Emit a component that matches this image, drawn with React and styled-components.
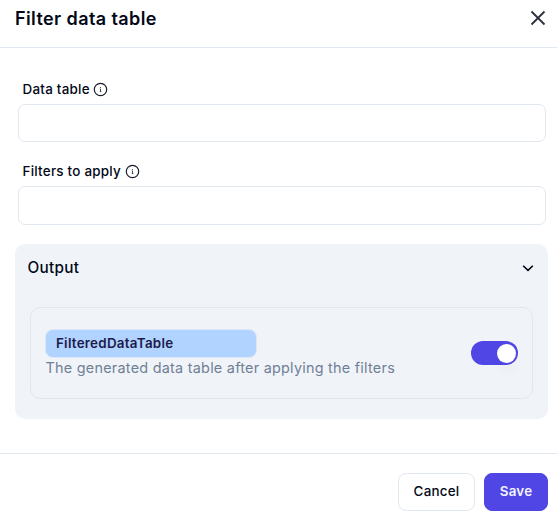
import React from "react";
import styled, { createGlobalStyle } from "styled-components";

const GlobalStyle = createGlobalStyle`
  * { box-sizing: border-box; }
  body { margin: 0; background: #fff; }
  button { font: inherit; cursor: pointer; }
`;

const Dialog = styled.div`
  width: 557px;
  height: 526px;
  display: flex;
  flex-direction: column;
  overflow: hidden;
  background: #fff;
  color: #020817;
  font-family: Inter, "Liberation Sans", sans-serif;
`;

const Header = styled.header`
  height: 48px;
  display: flex;
  justify-content: space-between;
  align-items: flex-start;
  padding: 5px 11px 0 15px;
  border-bottom: 1px solid #e2e8f0;
`;

const Title = styled.h2`
  margin: 0;
  font-size: 18px;
  line-height: 27px;
  font-weight: 600;
  letter-spacing: 0.4px;
`;

const CloseButton = styled.button`
  display: flex;
  margin-top: 5px;
  padding: 0;
  border: 0;
  background: none;
  color: #2b303e;
`;

const Body = styled.main`
  height: 405px;
  padding: 31px 9px 0 15px;
`;

const Field = styled.div`
  display: flex;
  flex-direction: column;
  margin: 0 2px ${(p) => p.$gap}px 3px;
`;

const Label = styled.label`
  display: flex;
  align-items: center;
  gap: 3.5px;
  height: 20px;
  margin: 0 0 5px 4.5px;
  font-size: 13.4px;
  font-weight: 500;
  letter-spacing: 0.25px;
`;

const Input = styled.input`
  width: 100%;
  height: ${(p) => p.$height}px;
  padding: 0 12px;
  border: 1px solid #e2e8f0;
  border-radius: 7px;
  background: #fff;
  font: inherit;
  outline: none;
`;

const OutputPanel = styled.section`
  height: 175px;
  padding: 0 15px;
  border-radius: 10px;
  background: #f0f4f9;
`;

const PanelHeader = styled.div`
  height: 63px;
  padding: 0 0 15px;
  margin: 0 -0.5px 0 -2.5px;
  display: flex;
  align-items: center;
  justify-content: space-between;
  font-size: 15.3px;
  font-weight: 500;
  letter-spacing: 0.3px;
`;

const PanelTitle = styled.span`
  padding-bottom: 2px;
`;

const OutputCard = styled.div`
  height: 92px;
  display: flex;
  align-items: center;
  justify-content: space-between;
  padding: 0 14px;
  border: 1px solid #e2e6ed;
  border-radius: 10px;
`;

const Badge = styled.div`
  width: 212px;
  height: 29px;
  margin-top: 1px;
  padding: 0 10px;
  border: 1px solid #dce8f7;
  border-radius: 8px;
  background: #b0d4ff;
  color: #1e1b4b;
  font-size: 13.4px;
  line-height: 26px;
  font-weight: 600;
  letter-spacing: 0.25px;
`;

const Description = styled.div`
  height: 21px;
  margin-left: 0.5px;
  color: #718096;
  font-size: 14.4px;
  line-height: 19px;
  letter-spacing: 0.25px;
`;

const Toggle = styled.button`
  width: 47px;
  height: 24px;
  display: flex;
  justify-content: flex-end;
  align-items: center;
  padding: 0 2px;
  border: 0;
  border-radius: 12px;
  background: #4f46e5;
`;

const Thumb = styled.span`
  width: 19px;
  height: 19px;
  border-radius: 50%;
  background: #fff;
  box-shadow: 0 10px 15px -3px rgba(0, 0, 0, 0.05);
`;

const Footer = styled.footer`
  height: 73px;
  display: flex;
  justify-content: flex-end;
  gap: 9px;
  padding: 19px 9px 0;
  border-top: 1px solid #e2e8f0;
`;

const Button = styled.button`
  width: ${(p) => (p.$primary ? 64 : 77)}px;
  height: 38px;
  padding: 0 0 2px;
  border: 1px solid ${(p) => (p.$primary ? "#4f46e5" : "#e2e8f0")};
  border-radius: 8px;
  background: ${(p) => (p.$primary ? "#4f46e5" : "#fff")};
  color: ${(p) => (p.$primary ? "#f1f3ff" : "#020817")};
  font-size: 13.4px;
  font-weight: ${(p) => (p.$primary ? 600 : 500)};
  letter-spacing: 0.23px;
`;

const InfoIcon = () => (
  <svg width="15" height="15" viewBox="0 0 15 15" fill="none" stroke="#171c2b">
    <circle cx="7.5" cy="7.5" r="6.2" strokeWidth="1.2" />
    <path d="M6.8 6.9h.7v2.6M6.8 9.6h1.5" strokeWidth="0.8" />
    <circle cx="7.4" cy="5.4" r="0.5" fill="#171c2b" stroke="none" />
  </svg>
);

const CloseIcon = () => (
  <svg width="16" height="16" viewBox="0 0 16 16" fill="none" stroke="currentColor" strokeWidth="1.8">
    <path d="M1.5 1.5l13 13M14.5 1.5l-13 13" />
  </svg>
);

const ChevronIcon = () => (
  <svg width="12" height="8" viewBox="0 0 12 8" fill="none" stroke="#020817" strokeWidth="1.6">
    <path d="M1.2 1.7L6 6.4l4.8-4.7" />
  </svg>
);

export default function App() {
  return (
    <>
      <GlobalStyle />
      <Dialog role="dialog" aria-label="Filter data table">
        <Header>
          <Title>Filter data table</Title>
          <CloseButton aria-label="Close"><CloseIcon /></CloseButton>
        </Header>
        <Body>
          <Field $gap={19}>
            <Label htmlFor="table">Data table <InfoIcon /></Label>
            <Input id="table" $height={38} />
          </Field>
          <Field $gap={19}>
            <Label htmlFor="filters">Filters to apply <InfoIcon /></Label>
            <Input id="filters" $height={39} />
          </Field>
          <OutputPanel>
            <PanelHeader><PanelTitle>Output</PanelTitle> <ChevronIcon /></PanelHeader>
            <OutputCard>
              <div>
                <Badge>FilteredDataTable</Badge>
                <Description>The generated data table after applying the filters</Description>
              </div>
              <Toggle role="switch" aria-checked="true" aria-label="FilteredDataTable"><Thumb /></Toggle>
            </OutputCard>
          </OutputPanel>
        </Body>
        <Footer>
          <Button>Cancel</Button>
          <Button $primary>Save</Button>
        </Footer>
      </Dialog>
    </>
  );
}
